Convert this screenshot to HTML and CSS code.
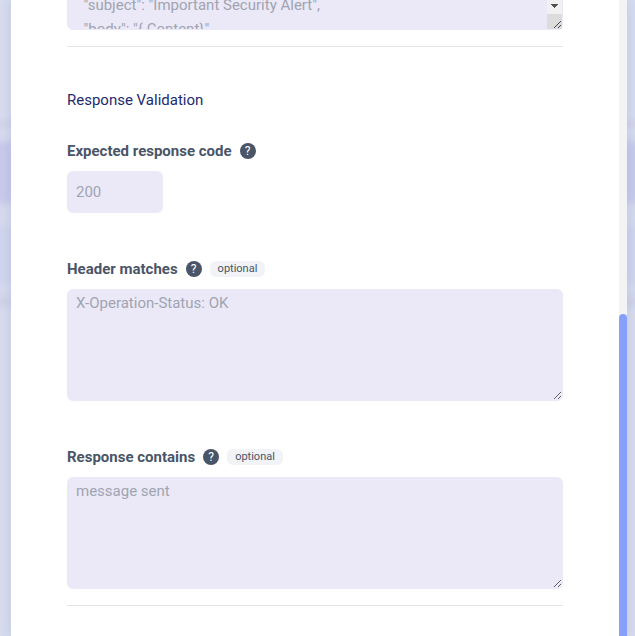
FILE: index.html
```html
<!DOCTYPE html>
<html lang="en">
<head>
    <meta charset="UTF-8">
    <meta name="viewport" content="width=device-width, initial-scale=1.0">
    <title>Response Validation</title>
    <link rel="stylesheet" href="styles.css">
</head>
<body>

<div class="modal">
    <form class="modal-content">
        <div class="body-field">
            <textarea class="request-body" aria-label="Request body" placeholder="  &quot;subject&quot;: &quot;Important Security Alert&quot;,&#10;  &quot;body&quot;: &quot;{ Content}&quot;"></textarea>
            <div class="field-scroll">
                <svg class="arrow" viewBox="0 0 15 14" shape-rendering="crispEdges"><path d="M4 4h7v1h-1v1h-1v1h-1v1h-1v-1h-1v-1h-1v-1h-1z" fill="#505050"/></svg>
                <svg class="corner" viewBox="0 0 15 15"><path d="M7 14l7-7M11 14l3-3" stroke="#444" fill="none"/></svg>
            </div>
        </div>

        <hr>

        <h2>Response Validation</h2>

        <div class="form-group">
            <div class="label-row">
                <label for="code">Expected response code</label>
                <button type="button" class="help" aria-label="Help">?</button>
            </div>
            <input type="text" id="code" placeholder="200">
        </div>

        <div class="form-group">
            <div class="label-row">
                <label for="header">Header matches</label>
                <button type="button" class="help" aria-label="Help">?</button>
                <span class="optional">optional</span>
            </div>
            <textarea id="header" placeholder="X-Operation-Status: OK"></textarea>
        </div>

        <div class="form-group">
            <div class="label-row">
                <label for="contains">Response contains</label>
                <button type="button" class="help" aria-label="Help">?</button>
                <span class="optional">optional</span>
            </div>
            <textarea id="contains" placeholder="message sent"></textarea>
        </div>

        <hr>
    </form>
    <div class="scrollbar"><div class="thumb"></div></div>
</div>

</body>
</html>
```
FILE: styles.css
```css
* {
    box-sizing: border-box;
}

body {
    margin: 0;
    height: 100vh;
    overflow: hidden;
    padding: 0 8px 0 11px;
    font-family: Roboto, sans-serif;
    font-size: 15px;
    line-height: 24px;
    color: #4a5568;
    background: linear-gradient(#d7dcef 116px, #d2d5ea 124px, #d7dcef 132px, #d5d9ee 138px, #c8cbeb 146px, #c8cbeb 198px, #d6daee 208px, #d7dbee 220px, #d0d5ef 232px, #d0d5ef 276px, #d6dbee 290px, #d1d4e8 302px, #d7dcef 312px);
}

.modal {
    display: flex;
    height: 100%;
    background: white;
    box-shadow: 0 0 12px rgba(60, 70, 130, 0.15);
}

.modal-content {
    flex: 1;
    padding: 0 56px;
    overflow: hidden;
}

/* request body, scrolled partly out of view */
.body-field {
    display: flow-root;
    position: relative;
    height: 30px;
}

textarea,
input {
    display: block;
    width: 100%;
    padding: 1px 8px;
    border: 1px solid #ebe9f7;
    border-radius: 6px;
    background: #ebe9f7;
    color: #4a5568;
    font: inherit;
}

textarea {
    height: 112px;
}

input {
    width: 96px;
    height: 42px;
}

textarea::placeholder,
input::placeholder {
    color: #a0a4b2;
    opacity: 1;
}

.body-field .request-body {
    height: 38px;
    margin-top: -8px;
    padding-top: 0;
    overflow: hidden;
    resize: none;
}

.field-scroll {
    position: absolute;
    right: 1px;
    bottom: 1px;
    width: 15px;
}

.field-scroll svg {
    display: block;
    width: 15px;
}

.arrow {
    height: 14px;
    background: #f1f1f1;
}

.corner {
    height: 15px;
    background: #dcdcdc;
}

hr {
    margin: 16px 0 0;
    border: none;
    border-top: 1px solid #e5e5e8;
}

h2 {
    margin: 41px 0 27px;
    font-size: 15px;
    font-weight: normal;
    color: #1e2a6e;
}

.form-group + .form-group {
    margin-top: 44px;
}

.label-row {
    display: flex;
    align-items: center;
    margin-bottom: 8px;
}

label {
    font-weight: bold;
}

.help {
    width: 16px;
    height: 16px;
    margin-left: 8px;
    padding: 0;
    border: none;
    border-radius: 50%;
    background: #4a5568;
    color: white;
    font: 12px/16px Roboto, sans-serif;
}

.optional {
    margin-left: 8px;
    padding: 0 8px;
    border-radius: 6px;
    background: #f1f3f6;
    font-size: 11px;
    line-height: 16px;
}

.scrollbar {
    display: flex;
    flex-direction: column;
    justify-content: flex-end;
    width: 8px;
    background: #f1f3f5;
}

.thumb {
    height: calc(50% + 4px);
    border-radius: 4px 4px 0 0;
    background: #869ffb;
}
```
